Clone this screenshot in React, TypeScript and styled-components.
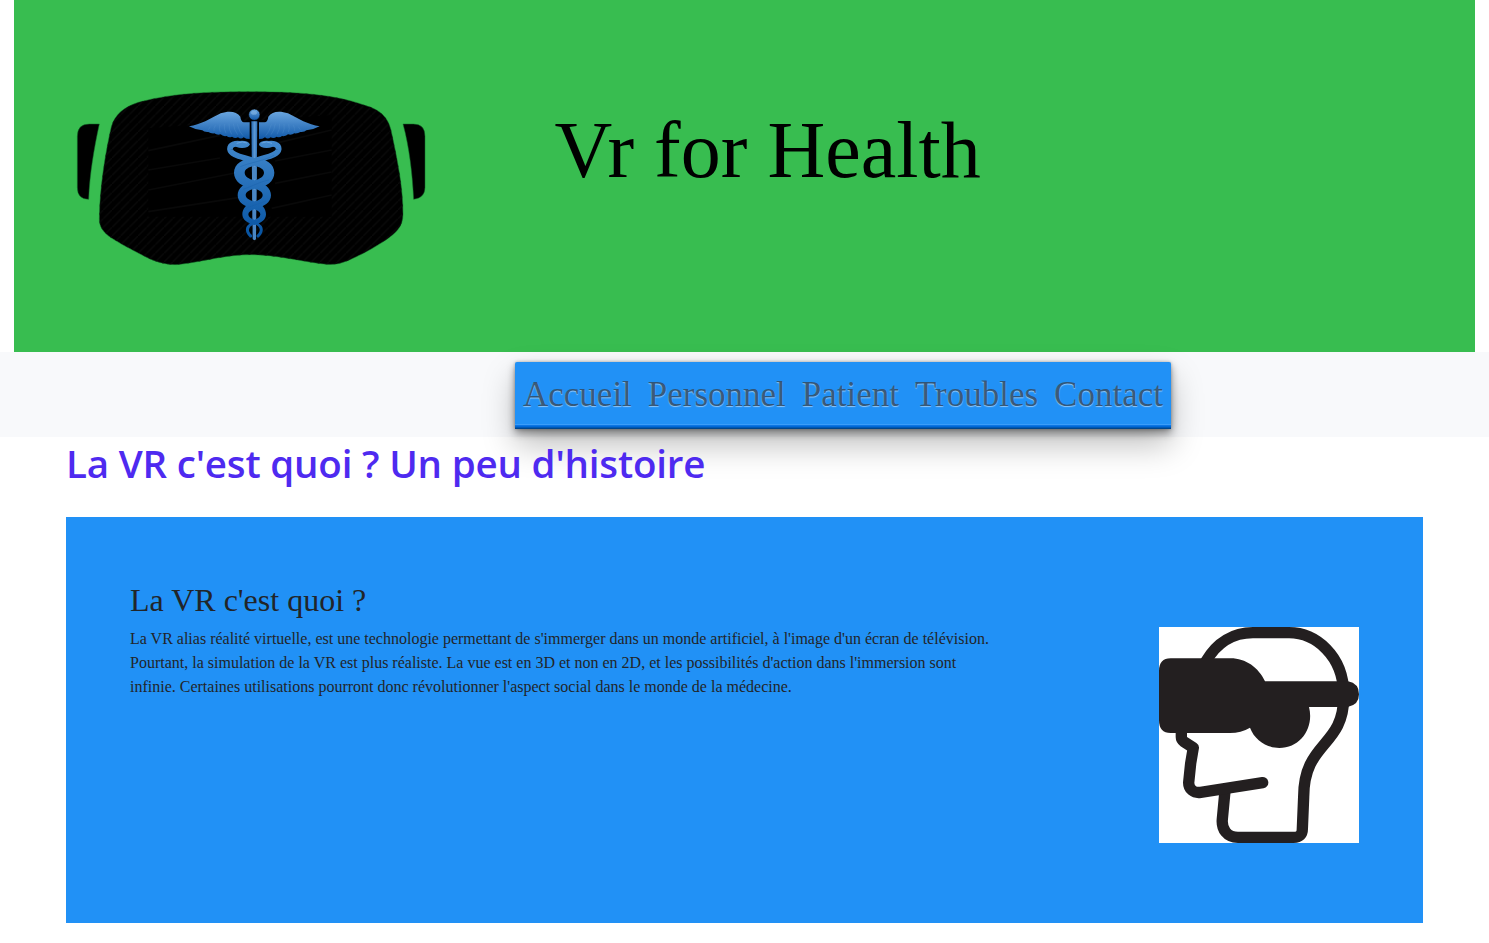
import React from "react";
import styled, { createGlobalStyle } from "styled-components";

const GlobalStyle = createGlobalStyle`
  *, *::before, *::after { box-sizing: border-box; }
  body {
    margin: 0;
    background: #fff;
    color: #212529;
    font-family: "Liberation Serif", "Times New Roman", serif;
    font-size: 16px;
    line-height: 1.5;
    overflow: hidden;
  }
  h1, h2, p { margin: 0; font-weight: 400; }
`;

const Header = styled.header`
  display: flex;
  align-items: flex-start;
  height: 352px;
  margin: 0 14px;
  padding: 80px 46px 0;
  background: #38bd50;
`;

const Logo = styled.svg`
  flex: none;
  width: 380px;
  height: 200px;
`;

const SiteTitle = styled.h1`
  margin: 22px 0 0 114.5px;
  color: #000;
  font-size: 80px;
  line-height: 96px;
  white-space: nowrap;
`;

const NavBar = styled.nav`
  display: flex;
  height: 85px;
  padding: 10px 0 8px 515px;
  background: #f8f9fb;
`;

const Menu = styled.ul`
  position: relative;
  display: flex;
  align-items: center;
  justify-content: space-between;
  width: 656px;
  height: 67px;
  margin: 0;
  padding: 0 8px;
  list-style: none;
  border-radius: 2px 2px 0 0;
  background: #2191f6;
  box-shadow:
    inset 0 -1px 0 #00458b,
    inset 0 -2px 0 #0058b4,
    inset 0 -3px 0 #0068d8,
    inset 0 -4px 0 #0b76e4,
    inset 0 -5px 0 #3b9dfa,
    0 0 3px rgba(0, 0, 0, 0.25),
    0 4px 8px rgba(0, 0, 0, 0.4),
    0 16px 32px rgba(0, 0, 0, 0.25);
`;

const MenuLink = styled.a`
  display: block;
  padding-bottom: 2px;
  color: rgba(48, 76, 103, 0.88);
  font-size: 35px;
  line-height: 52px;
  text-decoration: none;
  text-shadow: 0 1px 1px rgba(255, 255, 255, 0.5);
  white-space: nowrap;
`;

const Main = styled.main`
  padding: 0 66px;
`;

const SectionTitle = styled.h1`
  position: relative;
  height: 80px;
  padding-top: 2px;
  color: #4e2af0;
  font-family: "Open Sans", "Noto Sans", sans-serif;
  font-size: 38.5px;
  font-weight: 600;
  line-height: 48px;
  letter-spacing: -0.18px;
  white-space: nowrap;
`;

const Card = styled.section`
  display: flex;
  justify-content: space-between;
  height: 406px;
  padding: 64px;
  background: #2191f6;
`;

const Article = styled.article`
  width: 875px;
`;

const ArticleTitle = styled.h2`
  margin-bottom: 8px;
  font-size: 32px;
  line-height: 38px;
`;

const Paragraph = styled.p`
  font-size: 16px;
  line-height: 24px;
`;

const Illustration = styled.svg`
  flex: none;
  width: 200px;
  height: 216px;
  margin-top: 46px;
  background: #fff;
`;

const HeadsetLogo = () => (
  <Logo viewBox="0 0 1140 600" role="img" aria-label="Vr for Health">
    <defs>
      <linearGradient id="blue" gradientUnits="userSpaceOnUse" x1="0" y1="180" x2="0" y2="470">
        <stop offset="0" stopColor="#4389cd" />
        <stop offset="0.4" stopColor="#2a73bc" />
        <stop offset="1" stopColor="#0653a2" />
      </linearGradient>
      <linearGradient id="wing" x1="0" y1="0" x2="0" y2="1">
        <stop offset="0" stopColor="#69a5df" />
        <stop offset="1" stopColor="#1159a9" />
      </linearGradient>
      <linearGradient id="staff" x1="0" y1="0" x2="1" y2="0">
        <stop offset="0" stopColor="#2469b2" />
        <stop offset="0.55" stopColor="#5d99d5" />
        <stop offset="1" stopColor="#2b70b8" />
      </linearGradient>
      <pattern id="weave" width="26" height="26" patternUnits="userSpaceOnUse">
        <path d="M-3 29L29-3" stroke="#0a0a0a" strokeWidth="4" />
      </pattern>
      <path
        id="shell"
        d="M118 415C119 325 136 218 154 140C165 104 190 82 235 67C345 36 466 35 573 35C704 35 824 42 915 76C962 90 983 111 993 150C1014 247 1029 324 1029 402C1029 440 1009 458 976 481C947 500 919 516 889 530C846 551 827 557 783 551C706 541 645 524 573 524C496 524 439 543 361 553C329 557 290 548 256 530C215 509 188 495 156 475C129 457 117 440 118 415Z"
      />
    </defs>
    <g stroke="#126b28" strokeWidth="1.5">
      <use href="#shell" fill="#000" />
      <path fill="#000" d="M118 132H88Q52 132 52 169V322Q52 358 86 358C89 282 102 206 118 132Z" />
      <path fill="#000" d="M1029 132H1060Q1095 132 1095 169V322Q1095 354 1061 358C1057 280 1048 202 1029 132Z" />
    </g>
    <use href="#shell" fill="url(#weave)" />
    <path fill="#000" d="M265 145L815 105V410H265Z" />
    <g fill="none" stroke="#090909" strokeWidth="5">
      <path d="M265 212L480 166M265 270L480 234M265 330L540 276M265 395L540 352M655 188L815 150M645 243L815 210M645 310L815 276M635 385L815 345" />
    </g>
    <path
      fill="url(#wing)"
      d="M387 139C422 135 451 115 482 100C506 92 530 93 541 110Q543 126 552 127H571V177L559 176L551 172Q543 179 534 172Q525 177 516 170Q507 174 500 168Q488 170 482 163Q471 166 463 160Q452 161 445 156Q432 157 427 151Q407 150 387 139Z"
    />
    <path
      fill="url(#wing)"
      d="M779 139C744 135 715 115 684 100C660 92 636 93 625 110Q623 126 614 127H595V177L607 176L615 172Q623 179 632 172Q641 177 650 170Q659 174 666 168Q678 170 684 163Q695 166 703 160Q714 161 721 156Q734 157 739 151Q759 150 779 139Z"
    />
    <g fill="none" stroke="#5f9bd5" strokeWidth="1.5" opacity="0.5">
      <path d="M532 133Q539 158 549 167M520 131Q523 151 533 164M507 131Q506 149 515 163M494 132Q491 148 498 160M480 133Q476 148 481 156M466 136Q460 146 462 153M451 140L445 149M634 133Q627 158 617 167M646 131Q643 151 633 164M659 131Q660 149 651 163M672 132Q675 148 668 160M686 133Q690 148 685 156M700 136Q706 146 704 153M715 140L721 149" />
    </g>
    <path fill="#000" d="M569 122H597V178H569Z" />
    <path fill="url(#staff)" d="M574 124H592L588 478L583 481L578 477Z" />
    <g fill="none" stroke="url(#blue)" strokeLinecap="round">
      <path strokeWidth="17" d="M547 193C525 187 509 195 510 208C513 229 556 231 592 247" />
      <path strokeWidth="17" d="M619 193C641 187 657 195 656 208C653 229 610 231 574 247" />
      <path strokeWidth="9" d="M583 427Q556 439 564 457Q567 464 572 468M583 427Q610 439 602 457Q599 464 594 468" />
    </g>
    <ellipse cx="546" cy="193" rx="23" ry="11" fill="url(#blue)" />
    <ellipse cx="620" cy="193" rx="23" ry="11" fill="url(#blue)" />
    <g fill="url(#blue)" fillRule="evenodd">
      <path d="M583 234C618 234 643 253 643 278C643 303 620 323 583 325C546 323 522 303 522 278C522 253 548 234 583 234ZM583 257C566 261 554 267 554 278C554 289 566 297 583 301C600 297 612 289 612 278C612 267 600 261 583 257Z" />
      <path d="M583 304C613 306 633 325 633 346C633 367 612 382 583 384C554 382 533 367 533 346C533 325 553 306 583 304ZM583 326C568 329 557 336 557 345C557 355 569 361 583 364C597 361 608 355 608 345C608 336 598 329 583 326Z" />
      <path d="M583 366C606 370 618 386 618 403C618 420 603 430 583 435C563 430 547 420 547 403C547 386 560 370 583 366ZM583 388C572 391 565 397 565 403C565 410 572 416 583 419C594 416 601 410 601 403C601 397 594 391 583 388Z" />
    </g>
    <g fill="none" stroke="#1459a5" strokeWidth="1.5" opacity="0.6">
      <path d="M541 260C568 248 611 243 642 226M549 328C586 315 603 304 627 300M552 387C582 375 600 370 618 363M565 431Q584 422 605 420" />
    </g>
    <path d="M576 260H590V298H576ZM577 329H589V361H577ZM578 391H588V416H578ZM579 436H587V476L583 480L579 476Z" fill="#4b87c4" />
    <circle cx="583" cy="104" r="17" fill="url(#wing)" stroke="#000" strokeWidth="2" />
    <ellipse cx="582" cy="98" rx="9" ry="6" fill="#88b9e7" opacity="0.6" />
    <path d="M530 190Q548 182 561 189M636 190Q618 182 605 189" fill="none" stroke="#6aa5df" strokeWidth="3" />
  </Logo>
);

const HeadsetWearer = () => (
  <Illustration viewBox="0 0 600 648" role="img" aria-label="Casque de réalité virtuelle">
    <g fill="none" stroke="#231f20" strokeWidth="34" strokeLinejoin="round" strokeLinecap="round">
      <path d="M141 103C174 45 225 17 282 17H390C470 17 553 86 554 200V210C554 361 434 343 434 510L430 606Q430 631 404 631H237C204 631 187 607 190 576L198 492" />
      <path d="M67 305V330Q67 338 75 344L103 362L95 409L89 467C89 486 104 499 125 496L311 467" />
    </g>
    <path
      fill="#231f20"
      d="M35 94H215C260 94 299 122 318 163H567Q600 169 600 202Q600 234 566 240H450C466 302 425 363 361 363C323 363 287 339 273 302Q246 318 213 318H35Q0 318 0 280V132Q0 94 35 94Z"
    />
  </Illustration>
);

const links = ["Accueil", "Personnel", "Patient", "Troubles", "Contact"];

export default function App() {
  return (
    <>
      <GlobalStyle />
      <Header>
        <HeadsetLogo />
        <SiteTitle>Vr for Health</SiteTitle>
      </Header>
      <NavBar>
        <Menu>
          {links.map((label) => (
            <li key={label}>
              <MenuLink href="#">{label}</MenuLink>
            </li>
          ))}
        </Menu>
      </NavBar>
      <Main>
        <SectionTitle>La VR c'est quoi ? Un peu d'histoire</SectionTitle>
        <Card>
          <Article>
            <ArticleTitle>La VR c'est quoi ?</ArticleTitle>
            <Paragraph>
              La VR alias réalité virtuelle, est une technologie permettant de s'immerger dans un monde artificiel, à
              l'image d'un écran de télévision. Pourtant, la simulation de la VR est plus réaliste. La vue est en 3D et
              non en 2D, et les possibilités d'action dans l'immersion sont infinie. Certaines utilisations pourront
              donc révolutionner l'aspect social dans le monde de la médecine.
            </Paragraph>
          </Article>
          <HeadsetWearer />
        </Card>
      </Main>
    </>
  );
}
